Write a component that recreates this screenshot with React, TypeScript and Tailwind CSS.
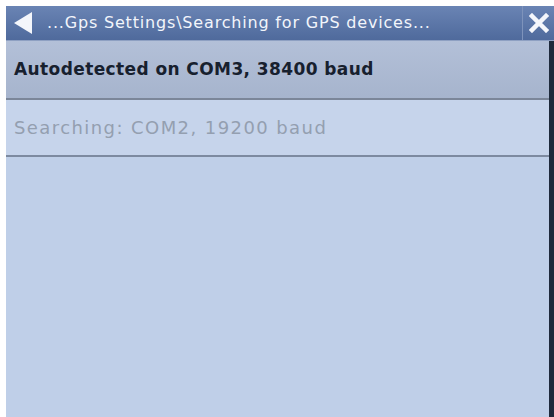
import React from "react";

export default function App() {
  return (
    <div className="w-[554px] h-[417px] bg-white pt-[6px] pl-[6px] flex flex-col overflow-hidden" style={{ fontFamily: '"DejaVu Sans", sans-serif' }}>
      <div className="h-[35px] flex items-stretch bg-gradient-to-b from-[#6a84b4] to-[#4f6a9c] border-b border-[#8ea0c2]">
        <div className="w-[34px] flex items-center justify-center">
          <svg width="22" height="24" viewBox="0 0 22 24">
            <polygon points="2,12 20,1 20,23" fill="#f4f6fb" />
          </svg>
        </div>
        <div className="flex-1 flex items-center pl-[7px] text-[#f2f5fb] text-[16px] tracking-[0.82px] whitespace-nowrap">
          ...Gps Settings\Searching for GPS devices...
        </div>
        <div className="w-[32px] border-l border-[#7e93bb] flex items-center justify-center">
          <svg width="20" height="20" viewBox="0 0 20 20">
            <path d="M3 3 L17 17 M17 3 L3 17" stroke="#f4f6fb" strokeWidth="4.5" strokeLinecap="square" />
          </svg>
        </div>
      </div>
      <div className="flex-1 flex bg-[#bfcfe8]">
        <div className="flex-1 flex flex-col">
          <div className="h-[59px] bg-gradient-to-b from-[#b3c0d8] to-[#a6b4cd] border-b-2 border-[#7b8699] flex items-center pl-[8px] text-[17px] tracking-[0.4px] font-bold text-[#17202e] whitespace-nowrap">
            Autodetected on COM3, 38400 baud
          </div>
          <div className="h-[57px] bg-[#c6d4eb] border-b-2 border-[#7d8aa0] flex items-center pl-[8px] text-[18px] tracking-[1.42px] text-[#949fb0] whitespace-nowrap">
            Searching: COM2, 19200 baud
          </div>
        </div>
        <div className="w-[5px] bg-[#1e2a3c]" />
      </div>
    </div>
  );
}
